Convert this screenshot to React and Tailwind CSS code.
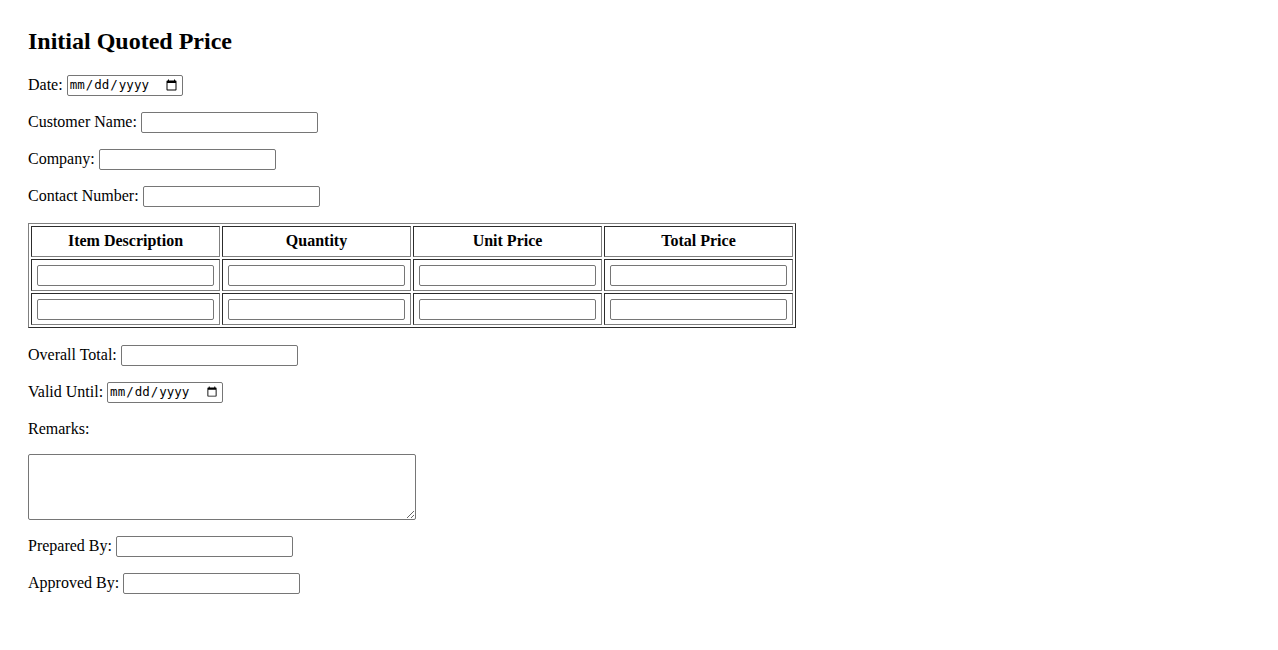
import React from "react";

const textInput =
  "w-[177px] h-[21px] border border-[#767676] rounded-[2px] bg-white px-[2px] font-['Liberation_Sans',Arial,sans-serif] text-[13.33px]";
const dateInput =
  "w-[116px] h-[21px] border border-[#767676] rounded-[2px] bg-white pl-[1px] pr-[2px] font-['DejaVu_Sans_Mono',monospace] text-[12.5px] text-black";

function Row({ label, children, className = "" }) {
  return (
    <div className={`flex items-center h-[21px] ${className}`}>
      <span className="pb-[2px]">{label}</span>
      <span className="ml-1 flex items-center">{children}</span>
    </div>
  );
}

export default function App() {
  const headers = ["Item Description", "Quantity", "Unit Price", "Total Price"];
  return (
    <div className="min-h-[650px] bg-white text-black font-['Liberation_Serif','Times_New_Roman',serif] text-[16px] pl-[28px] pt-[27px]">
      <h2 className="text-[24px] font-bold leading-[28px] mb-[20px]">Initial Quoted Price</h2>

      <div className="flex flex-col gap-[16px]">
        <Row label="Date:">
          <input type="date" className={dateInput} />
        </Row>
        <Row label="Customer Name:">
          <input type="text" className={textInput} />
        </Row>
        <Row label="Company:">
          <input type="text" className={textInput} />
        </Row>
        <Row label="Contact Number:">
          <input type="text" className={textInput} />
        </Row>
      </div>

      <table className="mt-[16px] mb-[17px] border-separate border-spacing-[2px] border border-[#808080] [border-style:outset] w-[768px]">
        <thead>
          <tr>
            {headers.map((h) => (
              <th key={h} className="p-0 border border-[#808080] [border-style:inset] w-[189px]">
                <div className="h-[29px] pb-[2px] flex items-center justify-center font-bold">{h}</div>
              </th>
            ))}
          </tr>
        </thead>
        <tbody>
          {[0, 1].map((r) => (
            <tr key={r}>
              {headers.map((h) => (
                <td key={h} className="p-0 border border-[#808080] [border-style:inset]">
                  <div className="h-[30px] px-[5px] flex items-center">
                    <input type="text" className={textInput} />
                  </div>
                </td>
              ))}
            </tr>
          ))}
        </tbody>
      </table>

      <div className="flex flex-col gap-[16px]">
        <Row label="Overall Total:">
          <input type="text" className={textInput} />
        </Row>
        <Row label="Valid Until:">
          <input type="date" className={dateInput} />
        </Row>
        <div className="flex items-center h-[21px] pb-[2px]">Remarks:</div>
      </div>

      <textarea className="block mt-[14px] w-[388px] h-[66px] border border-[#767676] rounded-[2px] bg-white p-[2px] font-['DejaVu_Sans_Mono',monospace] text-[13.33px]"></textarea>

      <div className="flex flex-col gap-[16px] mt-[16px]">
        <Row label="Prepared By:">
          <input type="text" className={textInput} />
        </Row>
        <Row label="Approved By:">
          <input type="text" className={textInput} />
        </Row>
      </div>
    </div>
  );
}
